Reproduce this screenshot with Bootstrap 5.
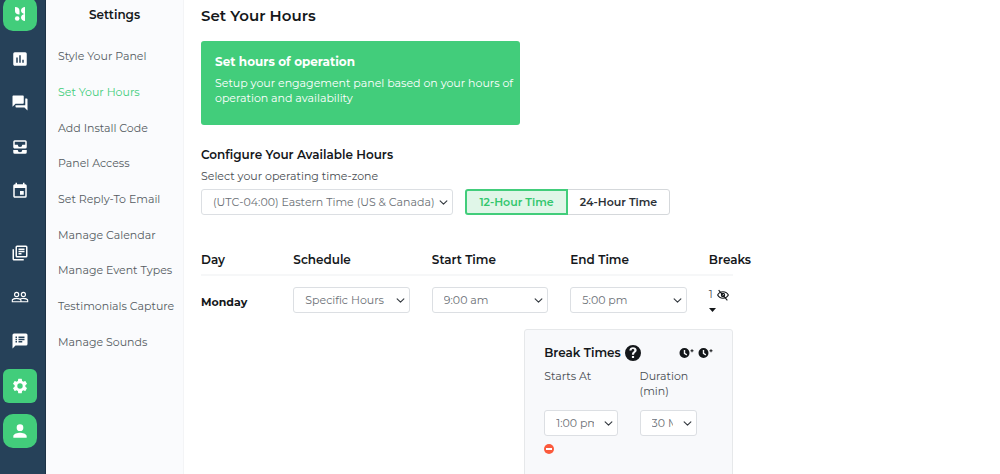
<!DOCTYPE html>
<html lang="en">
<head>
<meta charset="utf-8">
<meta name="viewport" content="width=device-width, initial-scale=1">
<title>Set Your Hours</title>
<link rel="stylesheet" href="https://cdn.jsdelivr.net/npm/bootstrap@5.3.0/dist/css/bootstrap.min.css">
<style>
  :root { --green: #42cd7b; --navy: #264159; }
  body { font-family: Montserrat, Inter, sans-serif; font-size: 11px; line-height: 15px; color: #484d52; background: #fff; }
  h1, h2, h3, .heading { font-size: 12px; line-height: 16px; font-weight: 600; color: #14171a; margin: 0; }
  h1 { font-size: 15px; line-height: 20px; }
  svg { display: block; fill: currentColor; }

  .rail { width: 46px; background: var(--navy); border-right: 1px solid #1d3347; }
  .rail a { color: #fff; display: flex; align-items: center; justify-content: center; width: 34px; height: 44px; margin-left: 3px; }
  .rail .tile { height: 34px; background: var(--green); border-radius: 6px; margin-top: 6px; }
  .rail .round { border-radius: 10px; margin-top: 11px; }
  .rail .logo { margin-top: -3px; margin-bottom: 6px; }
  .rail .split { margin-top: 18px; }

  .side { width: 138px; background: #fafbfd; border-right: 1px solid #f3f4f6; }
  .side h2 { padding: 7px 0 16px; }
  .side ul { height: 321px; grid-auto-rows: 1fr; }
  .side a { color: #555b62; text-decoration: none; white-space: nowrap; }
  .side a.active { color: #42cd7b; }

  main { padding: 6px 17px 0; }
  .panel-body { max-width: 532px; }
  .banner { width: 60%; background: var(--green); color: #fff; border-radius: 3px; padding: 13px 4px 19px 14px; margin: 15px 0 22px; }
  .banner h2 { color: #fff; font-weight: 700; margin-bottom: 6px; }
  .row { --bs-gutter-x: 22px; }

  .form-select { font-size: 11px; line-height: 16px; height: 26px; padding: 4px 23px 4px 11px; color: #6b7076; border-color: #dcdfe3; border-radius: 3px; background-position: right 4px center; background-size: 9px 9px; }
  .zone { width: 252px; padding-right: 14px; }
  .zone-label { margin: 6px 0 5px; }
  .btn-group .btn { width: 103px; height: 26px; padding: 0; font-size: 11px; font-weight: 600; line-height: 24px; color: #2b3036; border-color: #d5d8db; border-radius: 3px; }
  .btn-group .btn-check:checked + .btn { color: #32c76d; background: #e0f6e8; border: 2px solid #42cd7b; line-height: 22px; }

  .head-row { border-bottom: 2px solid #f6f7f8; padding: 8px 0 6px; margin: 29px 0 11px; }
  .day { padding-top: 7px; font-weight: 700; font-size: 11px; }
  .plain { border: 0; background: none; padding: 0; color: #14171a; }
  .break-row { margin-top: 12px; }
  .breaks { background: #f8f9fb; border: 1px solid #e6e8ea; border-radius: 3px 3px 0 0; padding: 14px 19px 20px; min-height: 150px; }
  .labels { margin: 7px 0 11px; }
</style>
</head>
<body>
<div class="d-flex min-vh-100">
  <nav class="rail flex-shrink-0" aria-label="Main">
    <a href="#" class="tile round logo" aria-label="Home"><svg width="14" height="18" viewBox="0 0 14 18"><path d="M2 2c3 0 4.500 1.500 4.500 4v3.500c-3 0-4.500-1.500-4.500-3.500z"/><circle cx="4.200" cy="13.500" r="2.300"/><path d="M12 2v7c-2 0-4-1.200-4-3.500S10 2 12 2zM12 16V9c-2 0-4 1.200-4 3.500S10 16 12 16z"/></svg></a>
    <a href="#" aria-label="Reports"><svg width="18" height="18" viewBox="0 0 24 24"><path d="M19 3H5a2 2 0 0 0-2 2v14c0 1.100.9 2 2 2h14a2 2 0 0 0 2-2V5a2 2 0 0 0-2-2zM9 17H7v-7h2v7zm4 0h-2V7h2v10zm4 0h-2v-4h2v4z"/></svg></a>
    <a href="#" aria-label="Conversations"><svg width="18" height="18" viewBox="0 0 24 24"><path d="M21 6h-2v9H6v2c0 .55.45 1 1 1h11l4 4V7c0-.55-.45-1-1-1zm-4 6V3c0-.55-.45-1-1-1H3c-.55 0-1 .45-1 1v14l4-4h10c.55 0 1-.45 1-1z"/></svg></a>
    <a href="#" aria-label="Inbox"><svg width="18" height="18" viewBox="0 0 24 24"><path d="M19 3H5a2 2 0 0 0-2 2v7c0 1.100.9 2 2 2h14a2 2 0 0 0 2-2V5a2 2 0 0 0-2-2zm0 6h-4a3 3 0 0 1-6 0H5V5h14v4zm-4 7h6v3a2 2 0 0 1-2 2H5a2 2 0 0 1-2-2v-3h6a3 3 0 0 0 6 0z"/></svg></a>
    <a href="#" aria-label="Calendar"><svg width="18" height="18" viewBox="0 0 24 24"><path d="M17 12h-5v5h5v-5zM16 1v2H8V1H6v2H5a2 2 0 0 0-2 2v14c0 1.100.9 2 2 2h14a2 2 0 0 0 2-2V5a2 2 0 0 0-2-2h-1V1h-2zm3 18H5V8h14v11z"/></svg></a>
    <a href="#" class="split" aria-label="Library"><svg width="18" height="18" viewBox="0 0 24 24"><path d="M4 7H2v13c0 1.100.9 2 2 2h13v-2H4V7zM20 2H8a2 2 0 0 0-2 2v12c0 1.100.9 2 2 2h12a2 2 0 0 0 2-2V4a2 2 0 0 0-2-2zm0 14H8V4h12v12zM10 9h8v2h-8zM10 12h4v2h-4zM10 6h8v2h-8z"/></svg></a>
    <a href="#" aria-label="Contacts"><svg width="18" height="18" viewBox="0 0 24 24"><path d="M16.500 13c-1.200 0-3.070.34-4.500 1-1.430-.67-3.300-1-4.500-1C5.330 13 1 14.080 1 16.250V19h22v-2.750c0-2.170-4.330-3.250-6.500-3.250zm-4 4.500h-10v-1.250c0-.54 2.560-1.750 5-1.750s5 1.210 5 1.750v1.250zm9 0H14v-1.250c0-.46-.2-.86-.52-1.220.88-.3 1.960-.53 3.020-.53 2.440 0 5 1.210 5 1.750v1.250zM7.500 12a3.500 3.500 0 1 0 0-7 3.500 3.500 0 0 0 0 7zm0-5.500a2 2 0 1 1 0 4 2 2 0 0 1 0-4zm9 5.500a3.500 3.500 0 1 0 0-7 3.500 3.500 0 0 0 0 7zm0-5.500a2 2 0 1 1 0 4 2 2 0 0 1 0-4z"/></svg></a>
    <a href="#" aria-label="Messages"><svg width="18" height="18" viewBox="0 0 24 24"><path d="M20 2H4a2 2 0 0 0-2 2v18l4-4h14a2 2 0 0 0 2-2V4a2 2 0 0 0-2-2zM8 14H6v-2h2v2zm0-3H6V9h2v2zm0-3H6V6h2v2zm7 6h-5v-2h5v2zm3-3h-8V9h8v2zm0-3h-8V6h8v2z"/></svg></a>
    <a href="#" class="tile" aria-label="Settings"><svg width="18" height="18" viewBox="0 0 24 24"><path d="M19.140 12.940c.04-.3.060-.61.060-.94s-.02-.64-.07-.94l2.030-1.580a.49.49 0 0 0 .12-.61l-1.920-3.320a.49.49 0 0 0-.59-.22l-2.390.96a7 7 0 0 0-1.620-.94l-.36-2.540a.48.48 0 0 0-.48-.41h-3.840a.47.47 0 0 0-.47.41l-.36 2.540c-.59.24-1.130.57-1.620.94l-2.390-.96a.48.48 0 0 0-.59.22L2.740 8.870a.47.47 0 0 0 .12.610l2.030 1.580a7 7 0 0 0-.02 1.880l-2.030 1.580a.49.49 0 0 0-.12.610l1.920 3.320c.12.220.37.290.59.220l2.390-.96c.5.380 1.030.7 1.620.94l.36 2.540c.05.240.24.410.48.410h3.840c.24 0 .44-.17.470-.41l.36-2.540a7 7 0 0 0 1.620-.94l2.390.96c.22.080.47 0 .59-.22l1.920-3.320a.47.47 0 0 0-.12-.61l-2-1.580zM12 15.600a3.600 3.600 0 1 1 0-7.200 3.600 3.600 0 0 1 0 7.200z"/></svg></a>
    <a href="#" class="tile round" aria-label="Account"><svg width="20" height="20" viewBox="0 0 24 24"><path d="M12 12a4 4 0 1 0 0-8 4 4 0 0 0 0 8zm0 2c-2.670 0-8 1.340-8 4v2h16v-2c0-2.660-5.330-4-8-4z"/></svg></a>
  </nav>

  <aside class="side flex-shrink-0">
    <h2 class="text-center">Settings</h2>
    <ul class="list-unstyled d-grid align-items-center mb-0 ps-2 ms-1">
      <li><a href="#">Style Your Panel</a></li>
      <li><a href="#" class="active" aria-current="page">Set Your Hours</a></li>
      <li><a href="#">Add Install Code</a></li>
      <li><a href="#">Panel Access</a></li>
      <li><a href="#">Set Reply-To Email</a></li>
      <li><a href="#">Manage Calendar</a></li>
      <li><a href="#">Manage Event Types</a></li>
      <li><a href="#">Testimonials Capture</a></li>
      <li><a href="#">Manage Sounds</a></li>
    </ul>
  </aside>

  <main class="flex-grow-1">
    <div class="panel-body">
      <h1>Set Your Hours</h1>
      <section class="banner">
        <h2>Set hours of operation</h2>
        <p class="mb-0">Setup your engagement panel based on your hours of operation and availability</p>
      </section>

      <h2>Configure Your Available Hours</h2>
      <label for="zone" class="d-block zone-label">Select your operating time-zone</label>
      <div class="d-flex gap-2">
        <select id="zone" class="form-select zone"><option>(UTC-04:00) Eastern Time (US &amp; Canada)</option></select>
        <div class="btn-group ms-1" role="group" aria-label="Time format">
          <input type="radio" class="btn-check" name="fmt" id="h12" checked><label class="btn" for="h12">12-Hour Time</label>
          <input type="radio" class="btn-check" name="fmt" id="h24"><label class="btn" for="h24">24-Hour Time</label>
        </div>
      </div>

      <div class="head-row">
        <div class="row">
          <div class="col-2 heading">Day</div>
          <div class="col-3 heading">Schedule</div>
          <div class="col-3 heading">Start Time</div>
          <div class="col-3 heading">End Time</div>
          <div class="col-1 heading">Breaks</div>
        </div>
      </div>
      <div class="row">
        <h3 class="col-2 day">Monday</h3>
        <div class="col-3"><select class="form-select" aria-label="Schedule"><option>Specific Hours</option></select></div>
        <div class="col-3"><select class="form-select" aria-label="Start time"><option>9:00 am</option></select></div>
        <div class="col-3"><select class="form-select" aria-label="End time"><option>5:00 pm</option></select></div>
        <div class="col-1">
          <div class="d-flex align-items-center gap-1"><span>1</span>
            <button class="plain" aria-label="Hide breaks"><svg width="12" height="12" viewBox="1 1 22 22"><path d="M12 5C7 5 3 8 1 12c2 4 6 7 11 7s9-3 11-7c-2-4-6-7-11-7zm0 2c4 0 7 2 8.700 5-1.700 3-4.700 5-8.700 5s-7-2-8.700-5C5 9 8 7 12 7z"/><path fill="none" stroke="currentColor" stroke-width="2" d="M12 9a3 3 0 1 0 0 6 3 3 0 0 0 0-6zM4 3l16 19"/></svg></button>
          </div>
          <button class="plain d-block" aria-label="Expand"><svg width="7" height="15" viewBox="0 0 7 15"><path d="M0 6h7L3.500 10z"/></svg></button>
        </div>
      </div>

      <div class="row break-row">
        <div class="col-5 offset-7">
          <section class="breaks">
            <div class="d-flex align-items-center">
              <h3 class="me-1">Break Times</h3>
              <button class="plain" aria-label="Help"><svg width="16" height="18" viewBox="1 1 22 22"><path d="M12 1a11 11 0 1 0 0 22 11 11 0 0 0 0-22zm1.500 18h-3v-3h3v3zm2-8-1 1c-.8.800-1 1.400-1 2.500h-3c0-2 .4-3 1.500-4l1.400-1.300c1-1.100.3-2.700-1.400-2.700-1.100 0-2 .8-2 2H7c0-2.800 2.200-4.500 5-4.500s5 1.700 5 4.200c0 1.200-.6 2-1.500 2.800z"/></svg></button>
              <button class="plain ms-auto me-1" aria-label="Add break"><svg width="15" height="12" viewBox="0 0 15 12"><path fill-rule="evenodd" d="M5.500 1a5 5 0 1 0 0 10 5 5 0 0 0 0-10zM4.800 3h1.400v3l2 1.200-.7 1.200-2.700-1.700z"/><path d="M11.500 3.200h1v-1h1v1h1v1h-1v1h-1v-1h-1z"/></svg></button>
              <button class="plain" aria-label="Add break to all days"><svg width="15" height="12" viewBox="0 0 15 12"><path fill-rule="evenodd" d="M5.500 1a5 5 0 1 0 0 10 5 5 0 0 0 0-10zM4.800 3h1.400v3l2 1.200-.7 1.200-2.700-1.700z"/><path d="M11.500 3.200h1v-1h1v1h1v1h-1v1h-1v-1h-1z"/></svg></button>
            </div>
            <div class="labels"><div class="row">
              <label class="col-6" for="bs">Starts At</label>
              <label class="col-5" for="bd">Duration (min)</label>
            </div></div>
            <div class="row">
              <div class="col-6"><select id="bs" class="form-select"><option>1:00 pm</option></select></div>
              <div class="col-5"><select id="bd" class="form-select"><option>30 Min</option></select></div>
            </div>
            <button class="plain mt-2" aria-label="Remove break"><svg width="10" height="10" viewBox="0 0 10 10"><circle cx="5" cy="5" r="5" fill="#fb5a3c"/><path fill="#fff" d="M2 4h6v2H2z"/></svg></button>
          </section>
        </div>
      </div>
    </div>
  </main>
</div>
<script src="https://cdn.jsdelivr.net/npm/bootstrap@5.3.0/dist/js/bootstrap.bundle.min.js"></script>
</body>
</html>
